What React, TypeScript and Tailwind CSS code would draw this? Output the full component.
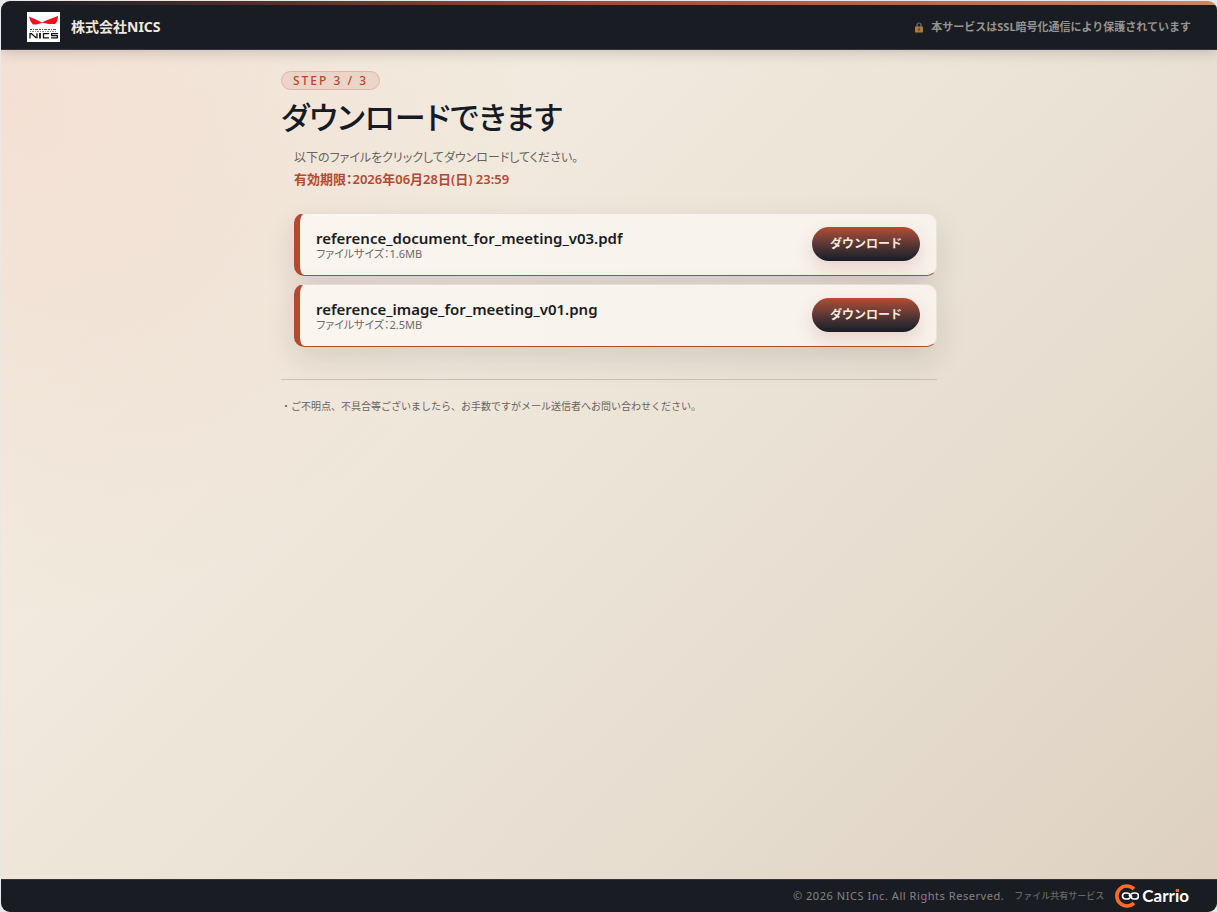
type SharedFile = {
  name: string
  size: string
}

const files: SharedFile[] = [
  { name: 'reference_document_for_meeting_v03.pdf', size: '1.6MB' },
  { name: 'reference_image_for_meeting_v01.png', size: '2.5MB' },
]

function NicsLogo() {
  return (
    <svg width="33" height="30" viewBox="0 0 33 30" role="img" aria-label="NICS" className="shrink-0">
      <rect width="33" height="30" fill="#fff" />
      <path d="M2 4.5 L11 8.5 L15 10.5 L19 8.5 L31 4 Q31 9 28 12 H22 L15 10.8 L10 12.5 H6 Q2.5 9 2 4.5Z" fill="#fb0d1b" />
      <path d="M3 17.5h27" stroke="#555" strokeDasharray="2 1 1 1 3 1" />
      <path d="M3 19.5h27" stroke="#888" strokeDasharray="1 1 2 1" />
      <g fill="none" stroke="#111" strokeWidth="1.3">
        <path d="M3 26.5v-4.8h1.500l4.500 4H10v-4.500" />
        <path d="M13 21v5.500" strokeWidth="1.800" />
        <path d="M22 21.700h-5.500v4.100H22" />
        <path d="M31 21.700h-6.300v2h5.600v2.100H24" />
      </g>
    </svg>
  )
}

function LockIcon() {
  return (
    <svg width="8" height="11" viewBox="0 0 8 11" aria-hidden="true" className="shrink-0">
      <path d="M2 5V3a2 2 0 0 1 4 0v2" fill="none" stroke="#77736b" strokeWidth="1.2" />
      <rect y="4.5" width="8" height="6" rx=".5" fill="#ad7b36" />
      <path d="M4 6.2v2.6" stroke="#453a31" strokeWidth="1.3" />
    </svg>
  )
}

function CarrioLogo() {
  return (
    <span className="flex items-center gap-[3px]">
      <svg width="25" height="24" viewBox="0 0 25 24" aria-hidden="true" className="shrink-0">
        <path d="M20 5A10 10 0 1 0 20 19" fill="none" stroke="#ff6b25" strokeWidth="3.6" />
        <g fill="none" stroke="#fff" strokeWidth="1.7" strokeLinecap="round">
          <path d="M15.500 14.200q-1.200.8-2.500.8h-1.500a3 3 0 0 1 0-6H13q2 0 3.500 2l1 1.500" />
          <path d="M17.500 9.800q1.200-.8 2.500-.8h1.500a3 3 0 0 1 0 6H20q-2 0-3.500-2l-1-1.500" />
        </g>
      </svg>
      <span className="[font-family:Lato,sans-serif] text-[17px] leading-5 font-bold text-white">
        Carr
        <span className="relative">
          i<span className="absolute top-1 left-px size-[3px] bg-[#ff6b25]" />
        </span>
        o
      </span>
    </span>
  )
}

function FileCard({ file }: { file: SharedFile }) {
  return (
    <li className="flex items-center justify-between gap-4 rounded-[10px] border border-l-[6px] border-t-[#e3ded7] border-r-[#e9e3dc] border-b-[#b34a30] border-l-[#b34a30] bg-linear-to-r from-[#faf5ee] to-[#f7f2ec] px-4 pt-[13px] pb-[14px] shadow-[0_12px_32px_rgba(26,28,35,0.12)]">
      <div className="min-w-0">
        <p className="truncate text-[15px] leading-5 font-semibold text-[#1a1c23]">{file.name}</p>
        <p className="text-[11px] leading-3 text-[#6c6a67] [font-feature-settings:'palt']">ファイルサイズ：{file.size}</p>
      </div>
      <button
        type="button"
        className="h-[34px] shrink-0 cursor-pointer rounded-full bg-linear-to-b from-[#b74c30] via-[#633a36] via-45% to-[#151d28] px-[18px] text-xs font-bold text-[#f5ebdf] shadow-[0_8px_18px_rgba(179,74,48,0.18)]"
      >
        ダウンロード
      </button>
    </li>
  )
}

export default function App() {
  return (
    <div className="min-h-screen bg-[#e6e9e7] pt-px pl-px font-['Noto_Sans','Noto_Sans_CJK_JP',sans-serif] text-[#1a1c23]">
      <div className="flex min-h-[calc(100vh-1px)] flex-col overflow-hidden rounded-[9px] bg-[radial-gradient(circle_at_0%_10%,rgba(224,90,70,0.10),transparent_36%),linear-gradient(135deg,#f6f0e5_0%,#f1e9dd_32%,#e8dfd2_65%,#ddd0c0_100%)]">
        <div className="h-1 bg-linear-to-r from-[#1a1c23] via-[#b34a30] to-[#d78a61]" />
        <header className="flex h-[45px] items-center justify-between border-b border-[#34343a] bg-[#1a1c23] px-[26px] shadow-[0_3px_12px_rgba(26,28,35,0.18)]">
          <div className="flex items-center gap-[11px]">
            <NicsLogo />
            <span className="text-sm font-bold text-[#eee8de]">株式会社NICS</span>
          </div>
          <div className="flex items-center gap-2 text-[11px] font-bold text-[#96948f]">
            <LockIcon />
            <span>本サービスはSSL暗号化通信により保護されています</span>
          </div>
        </header>

        <main className="mx-auto w-full max-w-[656px] flex-1 pt-[21px] pb-8">
          <p className="flex h-[19px] w-fit items-center rounded-full border border-[#dfb7a9] bg-[#ead5c8] px-[11px] text-xs font-medium tracking-[2px] text-[#b34a30]">
            STEP 3 / 3
          </p>
          <h1 className="mt-[7px] text-[31px] leading-10 font-medium text-[#141b24] [font-feature-settings:'palt']">
            ダウンロードできます
          </h1>

          <div className="pl-[13px]">
            <p className="mt-[11px] text-xs leading-5 text-[#67645f] [font-feature-settings:'palt']">
              以下のファイルをクリックしてダウンロードしてください。
            </p>
            <p className="mt-px text-[13px] leading-5 font-semibold text-[#b34a30] [font-feature-settings:'palt']">
              有効期限：2026年06月28日(日) 23:59
            </p>
            <ul className="mt-6 flex flex-col gap-2">
              {files.map(file => (
                <FileCard key={file.name} file={file} />
              ))}
            </ul>
          </div>

          <p className="mt-8 border-t border-[#c9c1b6] pt-4 text-[10px] leading-5 text-[#67645f]">
            ・ご不明点、不具合等ございましたら、お手数ですがメール送信者へお問い合わせください。
          </p>
        </main>

        <footer className="flex h-[33px] items-center justify-end gap-[10px] border-t border-[#34343a] bg-[#1a1c23] pr-7">
          <span className="text-[11px] tracking-wider text-[#85837f]">© 2026 NICS Inc. All Rights Reserved.</span>
          <span className="text-[9px] font-medium text-[#686762]">ファイル共有サービス</span>
          <CarrioLogo />
        </footer>
      </div>
    </div>
  )
}
